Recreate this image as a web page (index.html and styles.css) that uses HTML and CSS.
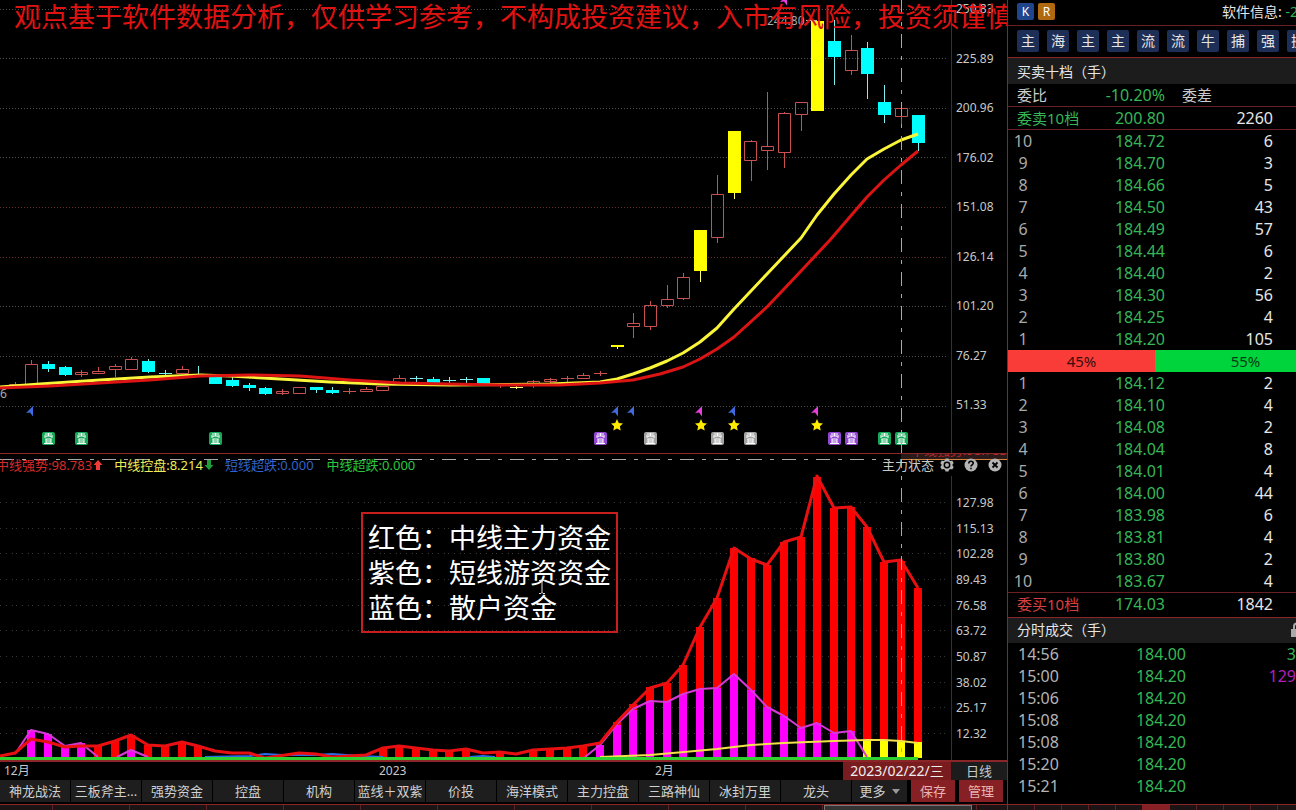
FILE: index.html
```html
<!DOCTYPE html>
<html lang="zh-CN">
<head>
<meta charset="utf-8">
<title>主力状态</title>
<link rel="stylesheet" href="styles.css">
</head>
<body>
<div class="app">
<main class="charts">
  <p class="notice">观点基于软件数据分析，仅供学习参考，不构成投资建议，入市有风险，投资须谨慎</p>

  <section class="panel panel-price">
    <svg class="plot" viewBox="0 0 951 453" preserveAspectRatio="xMinYMin meet">
      <defs>
        <g id="badge"><rect x="-6.5" y="-6.5" width="13" height="13" rx="2"/><path d="M-3.5-4.5h7M0-5.5v3M-4.5-2.5h9M-2-2.5l-2 2M2-2.5l2 2M-3 .5h6M-2.5.5v4h5v-4M-2.5 2.5h5M-4.500 5h9" fill="none" stroke="#fff"/></g>
        <path id="star" d="M0-6l1.800 3.900 4.200.500-3.100 2.900.800 4.200L0 3.500l-3.700 2 .8-4.200L-6-1.600l4.200-.5z" fill="#ffea00"/>
        <path id="flag" d="M3-5L-4 2 0 1.500 3 5.500z"/>
      </defs>
      <path class="grid" d="M0 9.500H946M0 58.500H946M0 108.500H946M0 157.500H946M0 306.500H946M0 356.500H946M0 406.500H946"/>
      <path class="grid grid-warm" d="M0 207.500H946M0 257.500H946"/>
      <path class="red-line" d="M15.500 382v2M31.500 360v4M81.500 370v7M98.500 367v4M115.500 364v2M115.500 370v7M131.500 357v2M182.500 366v3M282.500 389v6M349.500 388v6M343 391.500h13M366.500 387v2M399.500 375v3M500.500 383v5M533.500 380v8M550.500 378v5M567.500 376v6M561 378.500h13M583.500 373v2M600.500 371v5M594 373.500h13M633.500 313v10M633.500 326v12M650.500 301v4M650.500 327v3M667.500 285v14M667.500 305v3M683.500 273v4M683.500 298v2M717.500 175v19M717.500 238v5M751.500 140v1M751.500 161v20M767.500 92v54M767.500 151v19M784.500 112v1M784.500 153v15M801.500 115v16M851.500 35v15M851.500 71v4M901.500 117v7"/>
      <path class="red-line" d="M9.500 384.500h12v2h-12zM25.500 364.500h12v20h-12zM75.500 372.500h12v2h-12zM92.500 371.500h12v2h-12zM109.500 366.500h12v3h-12zM125.500 359.500h12v10h-12zM176.500 369.500h12v4h-12zM276.500 391.500h12v2h-12zM293.500 387.500h12v6h-12zM360.500 389.500h12v2h-12zM376.500 386.500h12v4h-12zM393.500 378.500h12v5h-12zM527.500 381.500h12v3h-12zM544.500 379.500h12v2h-12zM577.500 375.500h12v3h-12zM627.500 323.500h12v3h-12zM644.500 305.500h12v21h-12zM661.500 299.500h12v6h-12zM677.500 277.500h12v21h-12zM711.500 194.500h12v43h-12zM744.500 141.500h12v19h-12zM761.500 146.500h12v4h-12zM778.500 113.500h12v39h-12zM795.500 102.500h12v12h-12zM845.500 50.500h12v20h-12zM895.500 108.500h12v8h-12z"/>
      <path class="cyan-wick" d="M48.500 361v11M65.500 366v10M148.500 359v14M165.500 370v5M159 373.500h13M232.500 377v10M249.500 383v8M265.500 387v8M316.500 387v6M332.500 387v7M416.500 376v6M410 378.500h13M433.500 377v6M449.500 377v6M443 380.500h13M466.500 377v6M460 379.500h13M834.500 20v65M867.500 42v57M884.500 85v38M918.500 143v8M198.500 366v8"/>
      <path class="cyan-body" d="M48.500 364v5M65.500 367v8M148.500 361v11M215.500 377v7M232.500 380v6M249.500 385v3M265.500 388v6M316.500 387v3M332.500 390v3M433.500 379v4M483.500 378v6M834.500 41v16M867.500 48v26M884.500 102v13M918.500 115v28"/>
      <path class="yellow-body" d="M617.500 345v2M700.500 230v41M734.500 131v62M817.500 21v90"/>
      <path class="yellow-wick" d="M617.500 347v2M700.500 271v11M734.500 193v6M510 387.500h13M516.500 386v3"/>
      <path class="ma ma-yellow" d="M0 387L40 384L100 380L150 377L200 375L230 376L280 379L330 382L380 384L450 385L550 384L600 382L617 379L633 374L650 368L667 361L683 353L700 342L717 328L734 309L767 274L801 238L817 215L834 194L851 175L867 159L884 149L901 140L918 134"/>
      <path class="ma ma-red" d="M0 388L50 386L100 383L150 380L200 376L250 375L300 376L350 380L400 383L450 384L500 385L560 385L600 383L633 380L660 374L683 367L700 359L717 349L734 337L767 307L801 271L830 240L867 197L884 180L901 165L918 151"/>
      <g fill="#3f6be0"><use href="#flag" x="30" y="411"/><use href="#flag" x="615" y="411"/><use href="#flag" x="631" y="411"/><use href="#flag" x="732" y="411"/></g>
      <g fill="#e83ee0"><use href="#flag" x="699" y="411"/><use href="#flag" x="815" y="411"/><use href="#flag" x="784" y="0"/></g>
      <use href="#star" x="617" y="425"/><use href="#star" x="701" y="425"/><use href="#star" x="734" y="425"/><use href="#star" x="817" y="425"/>
      <g fill="#17a85a"><use href="#badge" x="48.500" y="438.500"/><use href="#badge" x="81.500" y="438.500"/><use href="#badge" x="215.500" y="438.500"/><use href="#badge" x="884.500" y="438.500"/><use href="#badge" x="901.500" y="438.500"/></g>
      <g fill="#9147d1"><use href="#badge" x="600.500" y="438.500"/><use href="#badge" x="834.500" y="438.500"/><use href="#badge" x="851.500" y="438.500"/></g>
      <g fill="#a3a3a3"><use href="#badge" x="650.500" y="438.500"/><use href="#badge" x="717.500" y="438.500"/><use href="#badge" x="750.500" y="438.500"/></g>
      <text class="plot-label" x="767" y="25">244.80</text>
      <path d="M806 20.500h11" stroke="#bbb"/>
      <text class="plot-label" x="0" y="398">6</text>
      <path class="cross" d="M901.500 0V453"/>
    </svg>
    <ul class="axis axis-price">
      <li>250.83</li><li>225.89</li><li>200.96</li><li>176.02</li><li>151.08</li><li>126.14</li><li>101.20</li><li>76.27</li><li>51.33</li>
    </ul>
  </section>

  <section class="panel panel-flow">
    <svg class="plot" viewBox="0 454 951 306" preserveAspectRatio="xMinYMin meet">
      <path class="grid grid-sparse" d="M0 502.500H946M0 528.500H946M0 553.500H946M0 579.500H946M0 605.500H946M0 630.500H946M0 656.500H946M0 682.500H946M0 707.500H946M0 733.500H946"/>
      <path class="bars bars-red" d="M98 746V758M115 741V758M131 735V758M148 745V758M165 746V758M182 742V758M198 746V758M383 749V758M399 746V758M416 747V758M433 750V758M449 751V758M466 749V758M500 752V758M533 750V758M550 749V758M567 748V758M583 746V758M617 722V758M633 704V758M650 687V758M667 683V758M683 665V758M700 627V758M717 598V758M734 548V758M751 558V758M767 565V758M784 542V758M801 537V758M817 477V758M834 508V758M851 507V758M867 527V758M884 562V758M901 561V758M918 588V758"/>
      <path class="bars bars-magenta" d="M31 730V758M48 734V758M65 746V758M81 743V758M131 750V758M600 745V758M617 725V758M633 710V758M650 701V758M667 701V758M683 694V758M700 689V758M717 688V758M734 675V758M751 690V758M767 707V758M784 716V758M801 728V758M817 723V758M834 733V758M851 731V758"/>
      <path class="bars bars-yellow" d="M867 740V758M884 740V758M901 741V758M918 742V758"/>
      <path class="line" stroke="#2c6be8" d="M205 757L250 756L265 754L282 755L316 755L332 754L360 756L383 757M470 757L483 756L495 757"/>
      <path class="line" stroke="#d63ad6" d="M15 754L31 730L48 734L65 746L81 743L98 757M117 757L131 750L148 757M585 757L600 745L617 724L633 709L650 701L667 702L683 694L700 689L717 688L734 674L751 690L767 707L784 716L801 728L817 723L834 733L851 731L867 757"/>
      <path class="line line-red" d="M0 756L15 753L31 739L48 742L65 747L81 746L98 746L115 741L131 735L148 745L165 746L182 742L198 746L215 751L232 753L249 753L265 758L299 753L316 754L332 757L366 755L383 748L399 746L416 748L433 750L449 751L466 749L483 753L500 752L516 754L533 750L550 749L567 748L583 746L600 743L617 722L633 705L650 688L667 683L683 665L700 627L717 598L734 548L751 559L767 565L784 542L801 537L817 476L834 508L851 507L867 527L884 562L901 560L918 588"/>
      <path class="line" stroke="#f2e24a" d="M600 757L650 755L684 752L717 749L751 745L784 743L834 741L867 740L884 740L901 741L918 743"/>
      <path d="M0 758.500H918" stroke="#2fd02f" stroke-width="3"/>
      <path class="cross" d="M0 459.500H890M901.500 454V760"/>
    </svg>
    <ul class="axis axis-flow">
      <li>127.98</li><li>115.13</li><li>102.28</li><li>89.43</li><li>76.58</li><li>63.72</li><li>50.87</li><li>38.02</li><li>25.17</li><li>12.32</li>
    </ul>
    <div class="legend">
      <span class="t-red">中线强势:98.783</span><svg class="arrow" viewBox="0 0 10 10"><path d="M5 0l4.500 5H7v5H3V5H.5z" fill="#f23a36"/></svg>
      <span class="t-yellow">中线控盘:8.214</span><svg class="arrow" viewBox="0 0 10 10"><path d="M5 10l4.500-5H7V0H3v5H.5z" fill="#1f9e3a"/></svg>
      <span class="t-blue">短线超跌:0.000</span>
      <span class="t-green">中线超跌:0.000</span>
    </div>
    <div class="value-tip"><span>中线强势:98.783</span></div>
    <div class="panel-tools">
      <span>主力状态</span>
      <button type="button" aria-label="设置"><svg viewBox="0 0 14 14"><path d="M5.500.5h3l.5 1.700 1.500.8 1.700-.4L13.700 5l-1.200 1.400v1.200L13.700 9l-1.500 2.400-1.700-.4-1.500.8-.5 1.700h-3L5 11.800 3.500 11l-1.700.4L.3 9l1.200-1.400V6.400L.3 5l1.500-2.400 1.700.4L5 2.200z" fill="#b4b4b4"/><circle cx="7" cy="7" r="2.700" fill="#b4b4b4" stroke="#000" stroke-width="1.500"/></svg></button>
      <button type="button" aria-label="帮助"><svg viewBox="0 0 14 14"><circle cx="7" cy="7" r="6.500" fill="#b4b4b4"/><path d="M4.800 5.500c0-3 4.400-2.800 4.400-.2C9.200 6.800 7 6.900 7 8.500M7 9.700v1.600" fill="none" stroke="#000" stroke-width="1.600"/></svg></button>
      <button type="button" aria-label="关闭"><svg viewBox="0 0 14 14"><circle cx="7" cy="7" r="6.500" fill="#b4b4b4"/><path d="M4.500 4.500l5 5M9.500 4.500l-5 5" stroke="#000" stroke-width="1.800"/></svg></button>
    </div>
    <div class="callout"><p>红色：中线主力资金</p><p>紫色：短线游资资金</p><p>蓝色：散户资金</p></div>
    <svg class="caret" viewBox="0 0 8 16"><path d="M1 1.500h2l1 1 1-1h2M4 2v12M1 14.500h2l1-1 1 1h2" fill="none" stroke="#ddd"/></svg>
  </section>

  <div class="dates">
    <span>12月</span><span>2023</span><span>2月</span><strong>2023/02/22/三</strong><em>日线</em>
  </div>
  <nav class="tabs">
    <button type="button">神龙战法</button><button type="button">三板斧主...</button><button type="button">强势资金</button><button type="button">控盘</button><button type="button">机构</button><button type="button">蓝线＋双紫</button><button type="button">价投</button><button type="button">海洋模式</button><button type="button">主力控盘</button><button type="button">三路神仙</button><button type="button">冰封万里</button><button type="button">龙头</button>
    <button type="button" class="more">更多<i></i></button>
    <button type="button" class="action">保存</button><button type="button" class="action">管理</button>
  </nav>
</main>

<aside class="side">
  <div class="topbar"><b class="key key-k">K</b><b class="key key-r">R</b><span class="info">软件信息: <i>-2</i></span></div>
  <div class="shortcuts">
    <button type="button">主</button><button type="button">海</button><button type="button">主</button><button type="button">主</button><button type="button">流</button><button type="button">流</button><button type="button">牛</button><button type="button">捕</button><button type="button">强</button><button type="button">换</button>
  </div>
  <h2 class="title">买卖十档（手）</h2>
  <table class="book">
    <colgroup><col class="c1"><col class="c2"><col class="c3"><col></colgroup>
    <tr class="sum ratio"><th>委比</th><td>-10.20%</td><td class="diff">委差</td><td></td></tr>
    <tr class="sum ask"><th>委卖10档</th><td>200.80</td><td>2260</td><td></td></tr>
  </table>
  <table class="book levels">
    <colgroup><col class="c1"><col class="c2"><col class="c3"><col></colgroup>
    <tr><th>10</th><td>184.72</td><td>6</td><td></td></tr>
    <tr><th>9</th><td>184.70</td><td>3</td><td></td></tr>
    <tr><th>8</th><td>184.66</td><td>5</td><td></td></tr>
    <tr><th>7</th><td>184.50</td><td>43</td><td></td></tr>
    <tr><th>6</th><td>184.49</td><td>57</td><td></td></tr>
    <tr><th>5</th><td>184.44</td><td>6</td><td></td></tr>
    <tr><th>4</th><td>184.40</td><td>2</td><td></td></tr>
    <tr><th>3</th><td>184.30</td><td>56</td><td></td></tr>
    <tr><th>2</th><td>184.25</td><td>4</td><td></td></tr>
    <tr><th>1</th><td>184.20</td><td>105</td><td></td></tr>
  </table>
  <div class="split"><span class="sell">45%</span><span class="buy">55%</span></div>
  <table class="book levels">
    <colgroup><col class="c1"><col class="c2"><col class="c3"><col></colgroup>
    <tr><th>1</th><td>184.12</td><td>2</td><td></td></tr>
    <tr><th>2</th><td>184.10</td><td>4</td><td></td></tr>
    <tr><th>3</th><td>184.08</td><td>2</td><td></td></tr>
    <tr><th>4</th><td>184.04</td><td>8</td><td></td></tr>
    <tr><th>5</th><td>184.01</td><td>4</td><td></td></tr>
    <tr><th>6</th><td>184.00</td><td>44</td><td></td></tr>
    <tr><th>7</th><td>183.98</td><td>6</td><td></td></tr>
    <tr><th>8</th><td>183.81</td><td>4</td><td></td></tr>
    <tr><th>9</th><td>183.80</td><td>2</td><td></td></tr>
    <tr><th>10</th><td>183.67</td><td>4</td><td></td></tr>
  </table>
  <table class="book">
    <colgroup><col class="c1"><col class="c2"><col class="c3"><col></colgroup>
    <tr class="sum bid"><th>委买10档</th><td>174.03</td><td>1842</td><td></td></tr>
  </table>
  <h2 class="title title-trades">分时成交（手）<svg viewBox="0 0 12 16"><path d="M3 8V4.500a3 3 0 0 1 6 0V8" fill="none" stroke="#aaa" stroke-width="2"/><path d="M0 7h12v8H0z" fill="#aaa"/></svg></h2>
  <table class="trades">
    <tr><th>14:56</th><td>184.00</td><td>3</td></tr>
    <tr><th>15:00</th><td>184.20</td><td class="big">129</td></tr>
    <tr><th>15:06</th><td>184.20</td><td></td></tr>
    <tr><th>15:08</th><td>184.20</td><td></td></tr>
    <tr><th>15:08</th><td>184.20</td><td></td></tr>
    <tr><th>15:20</th><td>184.20</td><td></td></tr>
    <tr><th>15:21</th><td>184.20</td><td></td></tr>
  </table>
</aside>
</div>
<footer class="strip"><div class="strip-left"><span></span></div><div class="strip-right"><span></span></div></footer>
</body>
</html>
```
FILE: styles.css
```css
* { box-sizing: border-box; margin: 0; padding: 0; }
body {
  background: #000;
  color: #c8c8c8;
  font: 13px/18px "Noto Sans", "Noto Sans CJK SC", sans-serif;
  height: 100vh;
  overflow: hidden;
  display: flex;
  flex-direction: column;
}
ul { list-style: none; }
button { border: 0; background: none; color: inherit; font: inherit; white-space: nowrap; }
i, em { font-style: normal; }

.app { flex: 1; min-height: 0; display: flex; overflow: hidden; }
.charts { flex: 1; min-width: 0; position: relative; display: flex; flex-direction: column; }
.notice {
  position: absolute;
  z-index: 2;
  top: 0;
  left: 14px;
  right: 0;
  overflow: hidden;
  white-space: nowrap;
  color: #e01212;
  font-size: 27px;
  line-height: 34px;
}

.panel { position: relative; display: flex; }
.panel-price { border-bottom: 1px solid #8a2628; }
.panel-flow { border-bottom: 2px solid #8a2628; }
.plot { flex: 1; min-width: 0; display: block; }
.axis {
  width: 56px;
  padding-left: 4px;
  border-left: 1px solid #5e2022;
  font-size: 12px;
  display: flex;
  flex-direction: column;
  justify-content: space-between;
}
.axis-price { padding-bottom: 39px; }
.axis-flow { border: 0; padding: 40px 0 17px 5px; background: linear-gradient(#5e2022, #5e2022) 0 22px / 1px 100% no-repeat; }

.grid { stroke: #4e4e4e; stroke-dasharray: 1 2; }
.grid-warm { stroke: #6a3030; }
.grid-sparse { stroke: #383838; stroke-dasharray: 1 5 1 5 1 3; }
.red-line { stroke: #c85050; fill: none; }
.cyan-wick { stroke: #7ff0ee; fill: none; }
.cyan-body { stroke: #0ff; stroke-width: 13; }
.yellow-body { stroke: #ff0; stroke-width: 13; }
.yellow-wick { stroke: #ffff70; }
.ma { fill: none; stroke-width: 3; stroke-linejoin: round; }
.ma-yellow { stroke: #fbf53a; }
.ma-red { stroke: #dc1414; }
.plot-label { fill: #aaa; font-size: 12px; }
.cross { stroke: #a8a8a8; fill: none; stroke-dasharray: 14 8 4 8; }
.bars { fill: none; stroke-width: 8; }
.bars-red { stroke: #f00; }
.bars-magenta { stroke: #f0f; }
.bars-yellow { stroke: #ff0; }
.line { fill: none; stroke-width: 2; stroke-linejoin: round; }
.line-red { stroke: #e81010; stroke-width: 3; }

.legend {
  position: absolute;
  top: 2px;
  left: -4px;
  display: flex;
  align-items: center;
  white-space: nowrap;
}
.arrow { width: 10px; height: 10px; margin: 0 11px 0 1px; }
.t-red { color: #d92a2a; }
.t-yellow { color: #f0ec5a; }
.t-blue { color: #2f62cc; margin-right: 13px; }
.t-green { color: #28c83c; }
.value-tip {
  position: absolute;
  top: 0;
  right: 0;
  width: 106px;
  height: 6px;
  overflow: hidden;
  background: #2a1a1a;
  border-bottom: 1px solid #d8823c;
  color: #b82828;
  white-space: nowrap;
  display: flex;
  align-items: flex-end;
  justify-content: flex-end;
}
.panel-tools { position: absolute; top: 2px; right: 5px; display: flex; align-items: center; gap: 10px; }
.panel-tools span { margin-right: -4px; }
.panel-tools button, .panel-tools svg { width: 14px; height: 14px; display: block; }
.callout {
  position: absolute;
  top: 58px;
  left: 361px;
  padding: 6px 5px;
  border: 2px solid #c81e1e;
  color: #fff;
  font-size: 27px;
  line-height: 35px;
  white-space: nowrap;
}
.caret { position: absolute; left: 538px; top: 125px; width: 8px; height: 16px; }

.dates { display: grid; grid-template-columns: 375fr 276fr 188fr 108px 56px; padding-left: 4px; height: 17px; line-height: 18px; font-size: 12px; }
.dates strong, .dates em { text-align: center; font-weight: 400; white-space: nowrap; }
.dates strong { background: #781c20; color: #eee; font-size: 14px; }
.dates em { background: #1c1c1c; font-size: 13px; }
.tabs { display: flex; gap: 1px; padding: 1px 4px 3px 0; }
.tabs button { flex: 1 1 0; min-width: 0; height: 22px; line-height: 22px; background: #1e1e1e; color: #d0d0d0; }
.tabs .more { flex: 0 0 55px; display: flex; align-items: center; justify-content: center; gap: 6px; }
.more i { border: 4px solid transparent; border-top: 5px solid #999; border-bottom: 0; }
.tabs .action { flex: 0 0 44px; margin-left: 3px; background: #862024; color: #e8b4b4; }

.side { width: 289px; border-left: 1px solid #8a2628; overflow: hidden; color: #e6e6e6; }
.topbar { height: 26px; padding: 3px 0 5px 9px; display: flex; gap: 4px; border-bottom: 1px solid #6a2022; overflow: hidden; }
.key { width: 17px; height: 17px; line-height: 17px; border-radius: 2px; text-align: center; font-size: 12px; font-weight: 400; color: #fff; }
.key-k { background: #1f468c; }
.key-r { background: #b0690e; }
.info { margin-left: auto; margin-right: -2px; white-space: nowrap; font-size: 14px; }
.info i { color: #2fb551; }
.shortcuts { height: 32px; padding: 4px 0 5px 9px; display: flex; gap: 8px; border-bottom: 1px solid #8a2628; overflow: hidden; }
.shortcuts button { flex: 0 0 22px; height: 22px; line-height: 22px; border-radius: 2px; background: #1d2f57; font-size: 14px; }
.title { height: 26px; line-height: 28px; padding-left: 9px; background: #1c1c1c; font-size: 14px; font-weight: 400; }
.title-trades { border-top: 1px solid #8a2628; display: flex; justify-content: space-between; align-items: center; overflow: hidden; }
.title svg { width: 12px; height: 16px; flex: none; margin-right: -7px; }

table { width: 100%; table-layout: fixed; border-collapse: collapse; }
th { font-weight: 400; text-align: left; white-space: nowrap; }
td { text-align: right; white-space: nowrap; }
.c1 { width: 80px; }
.c2 { width: 77px; }
.c3 { width: 108px; }
.book tr { height: 22px; font-size: 16px; line-height: 22px; }
.book td:nth-child(2) { color: #36b657; }
.book th { font-size: 15px; }
.sum th { padding-left: 9px; }
.ratio .diff { text-align: left; padding-left: 17px; font-size: 15px; color: #ccc; }
.ratio th { color: #ccc; }
.sum { border-bottom: 1px solid #6a2022; }
.ask th { color: #36b657; }
.bid { border-top: 1px solid #6a2022; border-bottom: 0; }
.book .bid { height: 24px; vertical-align: top; }
.bid th, .bid td { vertical-align: top; }
.bid th { color: #d84040; }
.levels th { padding-right: 50px; text-align: center; color: #aaa; }
.book.levels th { font-size: 16px; }
.split { display: flex; height: 22px; line-height: 22px; text-align: center; font-size: 15px; }
.sell { flex: 0 0 147px; background: #fa3c38; color: #3a0c0c; }
.buy { flex: 1; padding-left: 40px; background: #00d43c; color: #063c14; }
.trades { font-size: 16px; }
.trades tr { height: 22px; line-height: 22px; }
.trades th { width: 80px; padding-left: 10px; color: #b4b4b4; }
.trades td { color: #36b657; }
.trades td:nth-child(2) { width: 98px; }
.trades .big { color: #b020b8; }

.strip { height: 6px; display: flex; border-top: 1px solid #8a2628; background: #1c1414; }
.strip-left { flex: 1; display: flex; justify-content: flex-end; padding-right: 35px; background: repeating-linear-gradient(90deg, transparent 0 52px, #5e2022 52px 53px, transparent 53px 77px); }
.strip-left span { width: 148px; background: #333; border: 1px solid #777; border-bottom: 0; }
.strip-right { width: 289px; border-left: 1px solid #8a2628; padding-left: 134px; background: repeating-linear-gradient(90deg, transparent 0 26px, #5e2022 26px 27px); }
.strip-right span { display: block; width: 28px; height: 5px; background: #862024; }
```
